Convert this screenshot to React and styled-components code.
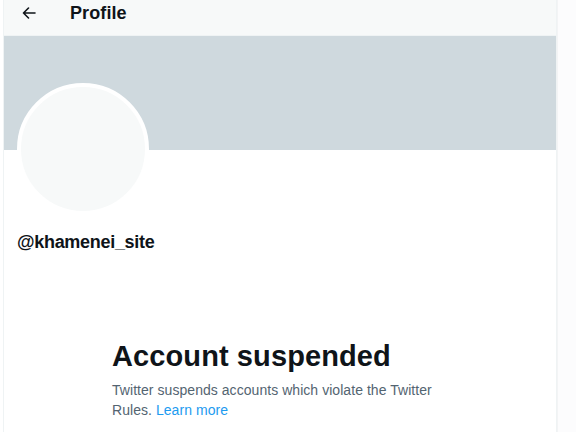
import React from 'react'
import styled, { createGlobalStyle } from 'styled-components'

const colors = {
    text: '#0f1419',
    muted: '#536471',
    link: '#1d9bf0',
    border: '#eff3f4',
    header: '#f7f9f9',
    banner: '#cfd9de',
    avatar: '#f7f9f9',
}

const GlobalStyles = createGlobalStyle`
    * {
        box-sizing: border-box;
        margin: 0;
        padding: 0;
    }
    body {
        background: #ffffff;
        color: ${colors.text};
        font-family: "Liberation Sans", Arial, sans-serif;
    }
`

const Page = styled.div`
    display: flex;
    min-height: 432px;
    padding-left: 3px;
`

const Column = styled.main`
    width: 554px;
    flex-shrink: 0;
    border-left: 1px solid ${colors.border};
    border-right: 1px solid ${colors.border};
    display: flex;
    flex-direction: column;
`

const Aside = styled.div`
    flex: 1;
    background: #fcfcfd;
    border-left: 1px solid #f3f4f5;
`

const Header = styled.header`
    height: 36px;
    background: ${colors.header};
    border-bottom: 1px solid ${colors.border};
    display: flex;
    align-items: flex-start;
    gap: 32px;
    padding: 1px 16px 0 18px;
`

const BackButton = styled.button`
    border: none;
    background: transparent;
    width: 16px;
    height: 24px;
    display: flex;
    align-items: center;
    color: ${colors.text};
    cursor: pointer;
`

const Title = styled.h2`
    font-size: 18px;
    font-weight: 700;
    line-height: 24px;
    letter-spacing: 0.1px;
`

const Banner = styled.div`
    height: 114px;
    background: ${colors.banner};
`

const ProfileInfo = styled.section`
    padding: 0 13px;
    display: flex;
    flex-direction: column;
`

const Avatar = styled.div`
    width: 132px;
    height: 132px;
    margin-top: -67px;
    border-radius: 50%;
    border: 4px solid #ffffff;
    background: ${colors.avatar};
`

const Handle = styled.div`
    margin-top: 16px;
    font-size: 18px;
    font-weight: 700;
    line-height: 22px;
    letter-spacing: -0.3px;
`

const EmptyState = styled.div`
    max-width: 336px;
    margin: 85px auto 0;
    display: flex;
    flex-direction: column;
    gap: 6px;
`

const Heading = styled.h1`
    font-size: 29px;
    font-weight: 700;
    line-height: 36px;
    letter-spacing: 0.1px;
`

const Description = styled.p`
    font-size: 14px;
    line-height: 20px;
    letter-spacing: 0.05px;
    color: ${colors.muted};
`

const Link = styled.a`
    color: ${colors.link};
    text-decoration: none;
`

const ArrowIcon = () => (
    <svg width="14" height="12" viewBox="0 0 14 12" fill="none">
        <path d="M13 6H1.5M6.5 1L1.5 6l5 5" stroke="currentColor" strokeWidth="1.6" strokeLinecap="round" strokeLinejoin="round" />
    </svg>
)

export default function App() {
    return (
        <>
            <GlobalStyles />
            <Page>
                <Column>
                    <Header>
                        <BackButton aria-label="Back">
                            <ArrowIcon />
                        </BackButton>
                        <Title>Profile</Title>
                    </Header>
                    <Banner />
                    <ProfileInfo>
                        <Avatar />
                        <Handle>@khamenei_site</Handle>
                    </ProfileInfo>
                    <EmptyState>
                        <Heading>Account suspended</Heading>
                        <Description>
                            Twitter suspends accounts which violate the Twitter Rules.{' '}
                            <Link href="#">Learn more</Link>
                        </Description>
                    </EmptyState>
                </Column>
                <Aside />
            </Page>
        </>
    )
}
